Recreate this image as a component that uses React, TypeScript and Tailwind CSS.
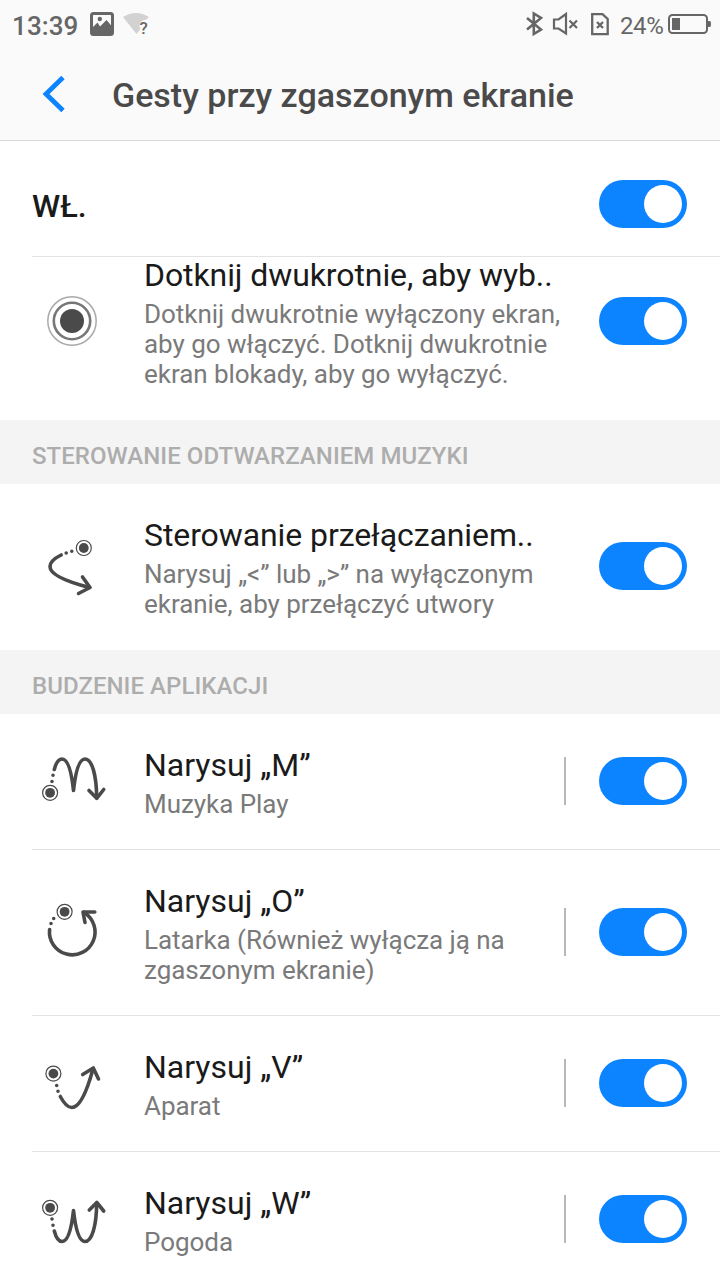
import { useState, type ReactNode } from "react";
import { clsx } from "clsx";

const INK = "#4a4a4a";

function Switch({ label }: { label: string }) {
  const [on, setOn] = useState(true);

  return (
    <button
      type="button"
      role="switch"
      aria-checked={on}
      aria-label={label}
      onClick={() => setOn((prev) => !prev)}
      className={clsx(
        "flex h-12 w-22 shrink-0 items-center rounded-full px-[5px]",
        on ? "justify-end bg-[#0d84ff]" : "justify-start bg-[#d0d0d0]",
      )}
    >
      <span className="h-[38px] w-[38px] rounded-full bg-white" />
    </button>
  );
}

function StartDot({ x, y }: { x: number; y: number }) {
  return (
    <>
      <circle cx={x} cy={y} r="7.5" fill="none" stroke={INK} strokeWidth="1.2" />
      <circle cx={x} cy={y} r="4.900" fill={INK} stroke="none" />
    </>
  );
}

function GestureIcon({ top, children }: { top: number; children: ReactNode }) {
  return (
    <svg
      className="h-20 w-[90px] shrink-0"
      viewBox={`0 ${top} 90 80`}
      fill="none"
      stroke={INK}
      strokeWidth="3.6"
      strokeLinecap="round"
      strokeLinejoin="round"
    >
      {children}
    </svg>
  );
}

const tapIcon = (
  <GestureIcon top={1}>
    <circle cx="42" cy="41" r="24.2" stroke="#aaaaaa" strokeWidth="1.5" />
    <circle cx="42" cy="41" r="18.2" stroke="#777777" strokeWidth="2.6" />
    <circle cx="42" cy="41" r="12" fill={INK} stroke="none" />
  </GestureIcon>
);

const musicIcon = (
  <GestureIcon top={1}>
    <StartDot x={53.8} y={23} />
    <path d="M41.8 26.3h.01M36.2 28h.01" />
    <path d="M31.2 30C25 33 20 37 20 41.500C20 50 38 57 59.500 62.500" />
    <path d="M52.500 52L60 62.500L48.500 68.500" />
  </GestureIcon>
);

const mIcon = (
  <GestureIcon top={1}>
    <StartDot x={20.1} y={52.8} />
    <path d="M22 41.500h.01M23 35.300h.01" />
    <path d="M24.300 29.500C26 23 28.500 19 32 19C38 19 41.500 32 43.500 50.500C45.500 32 49 19 55 19C62 19 66.500 35 66.700 58" />
    <path d="M59 50.500L66.700 58.300L73.700 49.500" />
  </GestureIcon>
);

const oIcon = (
  <GestureIcon top={2}>
    <StartDot x={34.6} y={21.8} />
    <path d="M23.700 28.500h.01M21 33.500h.01" />
    <path d="M19.600 39.500A22.800 22.800 0 1 0 54 22.500" />
    <path d="M64.800 22H53L55 32.500" />
  </GestureIcon>
);

const vIcon = (
  <GestureIcon top={-7}>
    <StartDot x={23.4} y={23.6} />
    <path d="M26.700 35.500h.01M28 41.300h.01" />
    <path d="M30.300 46.500C34 53.500 37.500 57.500 41.800 57.500C50 57.500 57 41 63 19" />
    <path d="M52.700 24.500L63.300 18L68.500 29" />
  </GestureIcon>
);

const wIcon = (
  <GestureIcon top={-11}>
    <StartDot x={20.1} y={17.8} />
    <path d="M22 29h.01M23 35.200h.01" />
    <path d="M24.300 41C26 47.500 28.500 51.500 32 51.500C38 51.500 41.500 38.500 43.500 20.500C45.500 38.500 49 51.500 55 51.500C62 51.500 66.500 35.500 66.700 13" />
    <path d="M59.300 20L66.800 12.500L73.700 21" />
  </GestureIcon>
);

interface GestureRowProps {
  icon: ReactNode;
  title: string;
  lines: string[];
  className: string;
  divided?: boolean;
  app?: boolean;
}

function GestureRow({ icon, title, lines, className, divided = false, app = false }: GestureRowProps) {
  return (
    <div className="shrink-0">
      <div className={clsx("flex items-center pr-[33px] pl-[30px]", className)}>
        {icon}
        <div className="mt-[3px] ml-6 flex min-w-0 flex-1 flex-col gap-[5px]">
          <p
            className={clsx(
              "text-[32px] leading-[38px] whitespace-nowrap text-[#1a1a1a]",
              !app && "tracking-[-0.09px]",
            )}
          >
            {title}
          </p>
          <p className="text-[26px] leading-[30px] tracking-[-0.04px] whitespace-nowrap text-[#7a7a7a]">
            {lines.map((line) => (
              <span key={line} className="block">
                {line}
              </span>
            ))}
          </p>
        </div>
        {app ? <span className="mr-[33px] h-12 w-0.5 shrink-0 bg-[#b8b8b8]" /> : null}
        <Switch label={title} />
      </div>
      {divided ? <div className="ml-8 h-px bg-[#e3e3e3]" /> : null}
    </div>
  );
}

function SectionTitle({ children }: { children: string }) {
  return (
    <h2 className="flex h-16 shrink-0 items-center bg-[#f4f4f4] pt-[7px] pl-8 text-[24px] leading-7 font-medium tracking-[0.05px] text-[#adadad]">
      {children}
    </h2>
  );
}

function StatusBar() {
  return (
    <div className="flex h-12 items-center pr-[9px] pl-3 text-[#666666]">
      <span className="w-[67px] pt-[3px] text-[26px] leading-8 font-medium tracking-[0.1px] whitespace-nowrap">
        13:39
      </span>
      <svg className="ml-[11px] h-12 w-6" viewBox="90 0 24 48" fill="none">
        <rect x="91.500" y="13.500" width="21" height="21" rx="2" stroke="#666" strokeWidth="3" />
        <circle cx="99.800" cy="19" r="2.200" fill="#666" />
        <path d="M92 28L97.500 22.500L100 26.500L106.500 20L112 26.500V34H92Z" fill="#666" />
      </svg>
      <svg className="ml-2 h-12 w-[30px]" viewBox="122 0 30 48" fill="none">
        <path
          d="M123 17Q136 9 149 17L146.500 19.500Q139 20 139.500 27L140.500 29L136.500 34Z"
          fill="#d2d2d2"
        />
        <text x="139.500" y="33.500" fill="#666" fontSize="17" fontWeight="500" fontFamily="Roboto">
          ?
        </text>
      </svg>
      <svg className="ml-auto h-12 w-[90px]" viewBox="524 0 90 48" fill="none" stroke="#666">
        <path d="M527 18L541 29.500L533.800 34V13.500L541 18L527 29.500" strokeWidth="2.600" />
        <path d="M554 19.500H558.500L566 14V33.500L558.500 28.500H554Z" strokeWidth="2.200" />
        <path d="M569.500 20.500L577 28M577 20.500L569.500 28" strokeWidth="2.200" />
        <path d="M592.200 14.200H602.500L607.700 19V34.200H592.200Z" strokeWidth="2.300" />
        <path d="M597 22L603 28M603 22L597 28" strokeWidth="2.300" />
      </svg>
      <span className="ml-1.5 w-[44px] pt-[3px] text-[24px] leading-8 tracking-[-0.4px] whitespace-nowrap">
        24%
      </span>
      <svg className="ml-1 h-12 w-[43px]" viewBox="668 0 43 48" fill="none">
        <rect x="669" y="15" width="38" height="18" rx="3.500" stroke="#666" strokeWidth="2" />
        <rect x="672" y="18" width="8" height="12" fill="#666" />
        <path d="M708 21H709.500Q711 21 711 24T709.500 27H708Z" fill="#666" />
      </svg>
    </div>
  );
}

export default function App() {
  return (
    <main className="flex h-[1280px] w-[720px] flex-col overflow-hidden bg-white font-['Roboto',sans-serif]">
      <header className="h-[141px] shrink-0 border-b border-[#dadada] bg-[#fafafa]">
        <StatusBar />
        <div className="flex h-[92px] items-center pl-[42px]">
          <button type="button" aria-label="Wstecz">
            <svg className="h-10 w-6" viewBox="0 0 24 40" fill="none">
              <path d="M21 3.500L4 20L21 36.500" stroke="#0d84ff" strokeWidth="4.800" />
            </svg>
          </button>
          <h1 className="ml-[46px] pt-px text-[34px] leading-10 font-medium whitespace-nowrap text-[#4a4a4a]">
            Gesty przy zgaszonym ekranie
          </h1>
        </div>
      </header>

      <div className="flex h-[115px] shrink-0 items-center justify-between pt-3 pr-[33px] pb-px pl-8">
        <span className="pt-1 text-[32px] leading-[38px] font-medium text-[#1a1a1a]">WŁ.</span>
        <Switch label="WŁ." />
      </div>
      <div className="ml-8 h-px shrink-0 bg-[#e3e3e3]" />

      {/* the list is scrolled a little under the master switch */}
      <div className="flex h-[163px] shrink-0 flex-col justify-end overflow-hidden">
        <GestureRow
          icon={tapIcon}
          title="Dotknij dwukrotnie, aby wyb.."
          lines={[
            "Dotknij dwukrotnie wyłączony ekran,",
            "aby go włączyć. Dotknij dwukrotnie",
            "ekran blokady, aby go wyłączyć.",
          ]}
          className="h-[196px] pb-0.5"
        />
      </div>

      <SectionTitle>STEROWANIE ODTWARZANIEM MUZYKI</SectionTitle>
      <GestureRow
        icon={musicIcon}
        title="Sterowanie przełączaniem.."
        lines={["Narysuj „<” lub „>” na wyłączonym", "ekranie, aby przełączyć utwory"]}
        className="h-[166px] pb-0.5"
      />

      <SectionTitle>BUDZENIE APLIKACJI</SectionTitle>
      <GestureRow
        icon={mIcon}
        title="Narysuj „M”"
        lines={["Muzyka Play"]}
        className="h-[135px] pb-px"
        divided
        app
      />
      <GestureRow
        icon={oIcon}
        title="Narysuj „O”"
        lines={["Latarka (Również wyłącza ją na", "zgaszonym ekranie)"]}
        className="h-[165px] pb-px"
        divided
        app
      />
      <GestureRow
        icon={vIcon}
        title="Narysuj „V”"
        lines={["Aparat"]}
        className="h-[135px] pb-px"
        divided
        app
      />
      <GestureRow
        icon={wIcon}
        title="Narysuj „W”"
        lines={["Pogoda"]}
        className="h-[135px] pb-px"
        app
      />
    </main>
  );
}
